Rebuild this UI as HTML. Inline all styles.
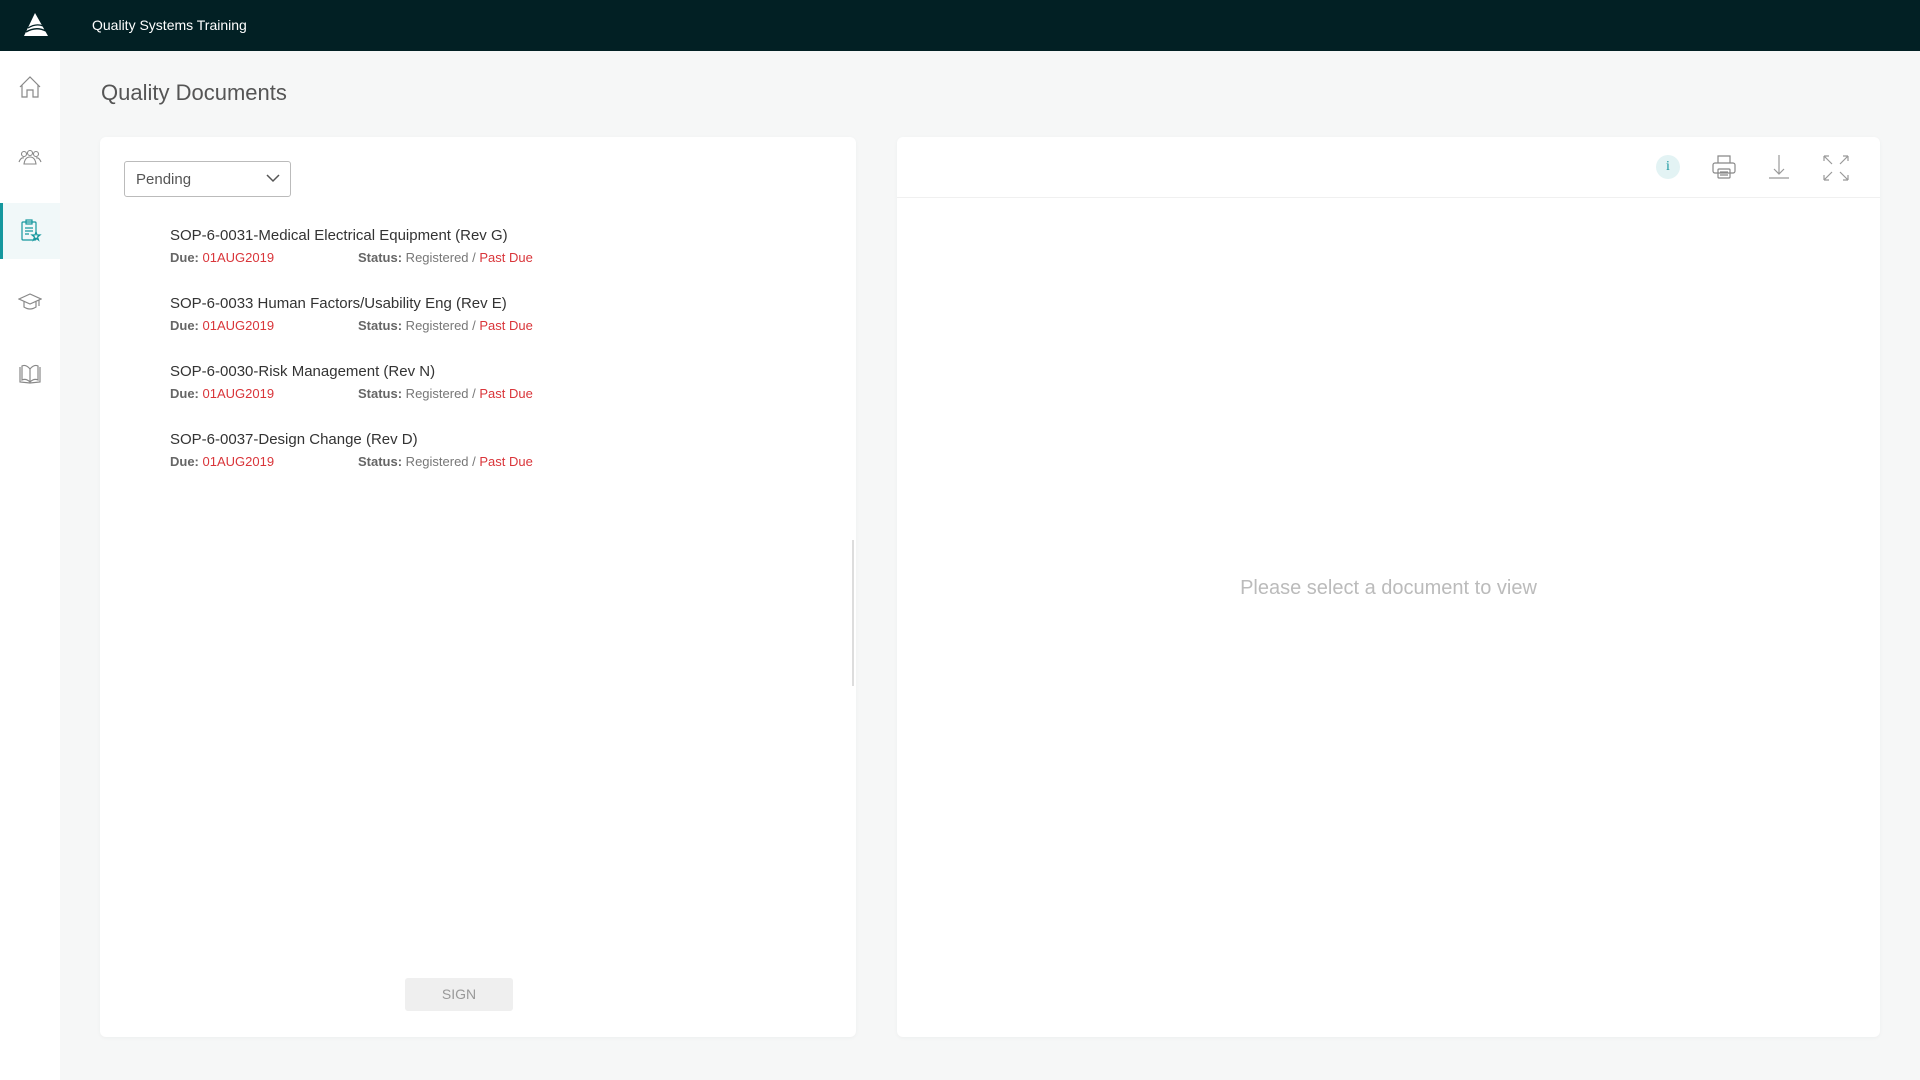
<!DOCTYPE html>
<html><head><meta charset="utf-8"><style>
*{margin:0;padding:0;box-sizing:border-box}
body{width:1920px;height:1080px;background:#f6f7f7;font-family:"Liberation Sans",sans-serif;position:relative;overflow:hidden;color:#333}
.hdr{position:absolute;left:0;top:0;width:1920px;height:51px;background:#022024}
.hdr .t{position:absolute;left:92px;top:17px;color:#fff;font-size:14px}
.side{position:absolute;left:0;top:51px;width:60px;height:1029px;background:#fff}
.act{position:absolute;left:0;top:152px;width:60px;height:56px;background:#f1f8f9;border-left:3px solid #15979e}
.ic{position:absolute;left:18px;width:24px;height:24px}
h1{position:absolute;left:101px;top:80px;font-weight:normal;font-size:22px;color:#555}
.card{position:absolute;background:#fff;border-radius:6px;box-shadow:0 1px 4px rgba(0,0,0,.04)}
.dd{position:absolute;left:24px;top:24px;width:167px;height:36px;border:1px solid #bbb;border-radius:3px;font-size:15px;color:#555;padding:9px 11px}
.item{position:absolute;left:70px;width:600px;white-space:nowrap}
.item .n{font-size:15px;color:#333}
.item .m{font-size:13px;color:#777;margin-top:6px;position:relative}
.item b{color:#666;font-weight:bold}
.r{color:#d9353a}
.st{position:absolute;left:188px;top:0;white-space:nowrap}
.sign{position:absolute;left:305px;top:841px;width:108px;height:33px;background:#efefef;border-radius:3px;color:#999;font-size:14px;text-align:center;line-height:33px}
.ph{position:absolute;left:0;width:983px;top:440px;text-align:center;font-size:20px;color:#bbb}
</style></head><body>
<div class="hdr">
<svg style="position:absolute;left:22px;top:12px" width="28" height="26" viewBox="0 0 28 26"><path d="M13 1 L26 24 L2 24 Z" fill="#fff"/><path d="M4 20 Q14 14 24 19" stroke="#022024" stroke-width="1.5" fill="none"/><path d="M6 16 Q14 11 21 14" stroke="#022024" stroke-width="1.2" fill="none"/></svg>
<div class="t">Quality Systems Training</div></div>
<div class="side">
<div class="act"></div>
<svg class="ic" style="top:24px" viewBox="0 0 24 24" fill="none" stroke="#888" stroke-width="1.2"><path d="M2 12 L12 2 L22 12 M4 10 V22 H9 V15 H15 V22 H20 V10"/></svg>
<svg class="ic" style="top:95px" viewBox="0 0 24 24" fill="none" stroke="#888" stroke-width="1.1"><circle cx="6" cy="8" r="2.5"/><circle cx="12" cy="7" r="2.5"/><circle cx="18" cy="8" r="2.5"/><path d="M1 16 Q3 11 6 12 M23 16 Q21 11 18 12 M6 18 Q7 11 12 11 Q17 11 18 18 Z"/></svg>
<svg class="ic" style="top:167px" viewBox="0 0 24 24" fill="none" stroke="#15979e" stroke-width="1.2"><rect x="4" y="4" width="14" height="18" rx="1"/><rect x="8" y="2" width="6" height="4"/><path d="M7 10H15M7 13H15M7 16H11"/><path d="M18 14 L19 17 L22 17 L19.5 19 L20.5 22 L18 20 L15.5 22 L16.5 19 L14 17 L17 17Z" fill="#fff"/></svg>
<svg class="ic" style="top:239px" viewBox="0 0 24 24" fill="none" stroke="#888" stroke-width="1.2"><path d="M1 9 L12 4 L23 9 L12 14 Z M6 11 V17 Q12 21 18 17 V11 M21 10 V16"/></svg>
<svg class="ic" style="top:310px" viewBox="0 0 24 24" fill="none" stroke="#888" stroke-width="1.2"><path d="M2 6 L2 21 L12 22 L22 21 L22 6 M12 8 V22 M4 5 Q8 3 12 8 Q16 3 20 5 V19 Q16 17 12 21 Q8 17 4 19 Z"/></svg>
</div>
<h1>Quality Documents</h1>
<div class="card" style="left:100px;top:137px;width:756px;height:900px">
<div class="dd">Pending<svg style="position:absolute;right:10px;top:12px" width="14" height="9" viewBox="0 0 14 9" fill="none" stroke="#555" stroke-width="1.5"><path d="M1 1 L7 7 L13 1"/></svg></div>
<div class="item" style="top:90px"><div class="n">SOP-6-0031-Medical Electrical Equipment (Rev G)</div><div class="m"><b>Due:</b> <span class="r">01AUG2019</span><span class="st"><b>Status:</b> Registered / <span class="r">Past Due</span></span></div></div>
<div class="item" style="top:158px"><div class="n">SOP-6-0033 Human Factors/Usability Eng (Rev E)</div><div class="m"><b>Due:</b> <span class="r">01AUG2019</span><span class="st"><b>Status:</b> Registered / <span class="r">Past Due</span></span></div></div>
<div class="item" style="top:226px"><div class="n">SOP-6-0030-Risk Management (Rev N)</div><div class="m"><b>Due:</b> <span class="r">01AUG2019</span><span class="st"><b>Status:</b> Registered / <span class="r">Past Due</span></span></div></div>
<div class="item" style="top:294px"><div class="n">SOP-6-0037-Design Change (Rev D)</div><div class="m"><b>Due:</b> <span class="r">01AUG2019</span><span class="st"><b>Status:</b> Registered / <span class="r">Past Due</span></span></div></div>
<div style="position:absolute;left:752px;top:403px;width:2px;height:146px;background:#ddd"></div>
<div class="sign">SIGN</div>
</div>
<div class="card" style="left:897px;top:137px;width:983px;height:900px">
<div style="position:absolute;left:0;top:60px;width:983px;height:1px;background:#f0f0f0"></div>
<div style="position:absolute;left:759px;top:18px;width:24px;height:24px;border-radius:50%;background:#e3f3f4;color:#15979e;font-size:14px;text-align:center;line-height:24px;font-family:'Liberation Serif',serif">i</div>
<svg style="position:absolute;left:814px;top:17px" width="26" height="26" viewBox="0 0 26 26" fill="none" stroke="#888" stroke-width="1.2"><path d="M7 9 V2 H19 V9"/><rect x="2" y="9" width="22" height="10" rx="2"/><rect x="7" y="15" width="12" height="9" rx="1"/><path d="M9 18H17M9 21H17"/></svg>
<svg style="position:absolute;left:871px;top:17px" width="22" height="26" viewBox="0 0 22 26" fill="none" stroke="#999" stroke-width="1.2"><path d="M11 1 V20 M6 15 L11 20 L16 15 M1 24 H21"/></svg>
<svg style="position:absolute;left:926px;top:18px" width="26" height="26" viewBox="0 0 26 26" fill="none" stroke="#999" stroke-width="1.2"><path d="M1 1 L9 9 M1 1 H6 M1 1 V6 M25 1 L17 9 M25 1 H20 M25 1 V6 M1 25 L9 17 M1 25 H6 M1 25 V20 M25 25 L17 17 M25 25 H20 M25 25 V20"/></svg>
<div class="ph">Please select a document to view</div>
</div>
</body></html>
